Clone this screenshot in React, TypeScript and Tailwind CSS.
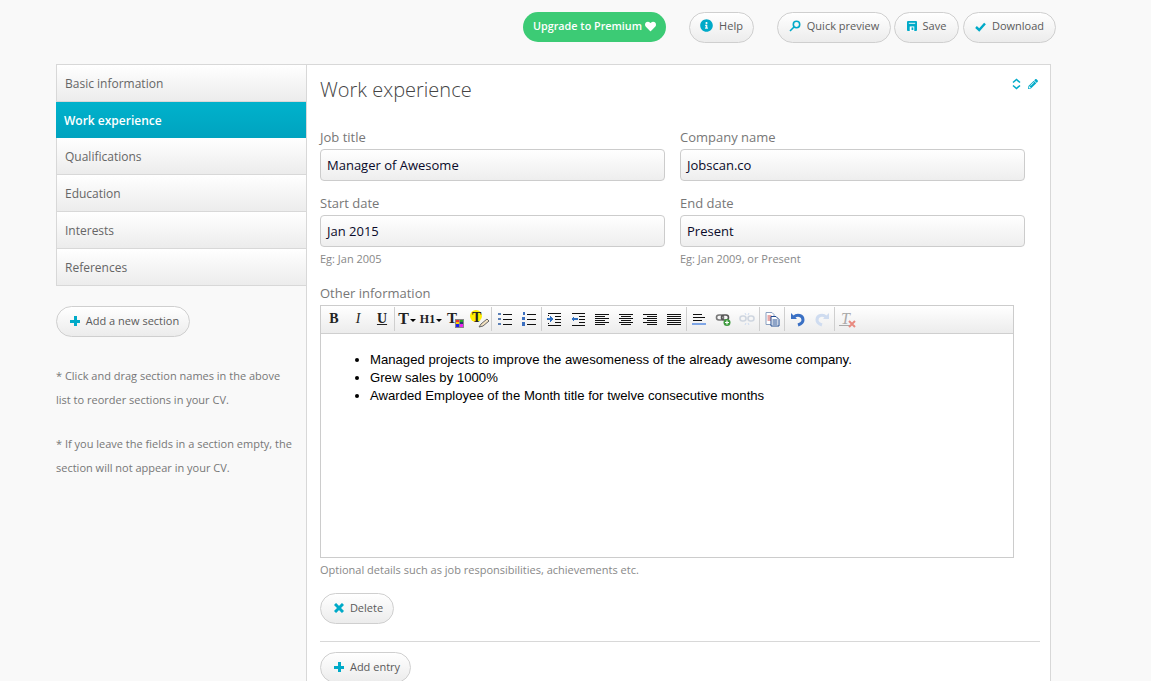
import { ReactNode } from "react";
import { FaHeart, FaInfoCircle, FaPencilAlt } from "react-icons/fa";

const sections = ["Basic information", "Work experience", "Qualifications", "Education", "Interests", "References"];

const Pill = ({ icon, label, className }: { icon: ReactNode; label: string; className: string }) => (
  <button className={`flex h-[31px] items-center justify-center gap-[6px] rounded-full border border-[#cfcfcf] bg-gradient-to-b from-white to-[#ececec] text-[11px] text-[#5a5a5a] ${className}`}>
    <span className="text-[#00aac8]">{icon}</span>
    {label}
  </button>
);

const PlusIcon = () => (
  <svg width="10" height="10" viewBox="0 0 10 10" className="mb-[2px]" shapeRendering="crispEdges">
    <path d="M3.5 0h3v3.5H10v3H6.5V10h-3V6.5H0v-3h3.5z" fill="currentColor" />
  </svg>
);

const Field = ({ label, value, hint }: { label: string; value: string; hint?: string }) => (
  <div className="w-[345px]">
    <label className="block h-[20px] text-[13px] leading-[16px] text-[#777]">{label}</label>
    <div className="flex h-[32px] items-center rounded-[4px] border border-[#ccc] bg-gradient-to-b from-white to-[#eeeeee] pl-[6px] pt-[2px] text-[13px] text-[#0a0a2a]">
      {value}
    </div>
    {hint && <p className="mt-[4px] h-[16px] text-[11px] leading-[16px] text-[#888]">{hint}</p>}
  </div>
);

// rows of black lines used by the list and align buttons
const Lines = ({ rows, color = "#111" }: { rows: [number, number, number][]; color?: string }) => (
  <svg width="16" height="16" viewBox="0 0 16 16" shapeRendering="crispEdges">
    {rows.map(([x, y, w]) => (
      <rect key={`${x}-${y}`} x={x} y={y} width={w} height="1" fill={color} />
    ))}
  </svg>
);

const Btn = ({ children }: { children: ReactNode }) => (
  <div className="flex h-[26px] w-6 shrink-0 items-center justify-center">{children}</div>
);

const Sep = () => <div className="my-[1px] h-[24px] w-px shrink-0 bg-[#cfcfcf]" />;

const Letter = ({ children, className }: { children: ReactNode; className: string }) => (
  <span className={`font-['Liberation_Serif',serif] leading-none text-[#222] ${className}`}>{children}</span>
);

const Caret = () => <span className="ml-[1px] mt-[2px] border-x-[3px] border-t-[3px] border-x-transparent border-t-black" />;

const Toolbar = () => (
  <div className="flex h-[28px] border-b border-[#cfcfcf] bg-gradient-to-b from-white to-[#ececec] pl-px">
    <Btn><Letter className="text-[14px] font-bold">B</Letter></Btn>
    <Btn><Letter className="text-[14px] italic">I</Letter></Btn>
    <Btn><Letter className="text-[14px] font-bold underline">U</Letter></Btn>
    <Sep />
    <Btn><Letter className="text-[16px] font-bold">T</Letter><Caret /></Btn>
    <Btn><Letter className="text-[12px] font-bold">H1</Letter><Caret /></Btn>
    <Btn>
      <div className="relative h-4 w-4">
        <Letter className="absolute left-0 top-0 text-[15px] font-bold">T</Letter>
        <svg className="absolute bottom-[-1px] right-[-1px]" width="9" height="9" viewBox="0 0 9 9" shapeRendering="crispEdges">
          <rect width="9" height="9" fill="#888" />
          <rect x="1" y="1" width="3" height="2" fill="#e33" />
          <rect x="5" y="1" width="3" height="2" fill="#2a2" />
          <rect x="1" y="3" width="3" height="2" fill="#fc0" />
          <rect x="5" y="3" width="3" height="2" fill="#246" />
          <rect x="1" y="5" width="3" height="3" fill="#22e" />
          <rect x="5" y="5" width="3" height="3" fill="#e2e" />
        </svg>
      </div>
    </Btn>
    <Btn>
      <div className="relative h-4 w-4">
        <span className="absolute left-[-1px] top-[-1px] h-[12px] w-[12px] rounded-full bg-[#ffee00]" />
        <Letter className="absolute left-[1px] top-0 text-[14px] font-bold">T</Letter>
        <svg className="absolute bottom-[-1px] right-[-3px]" width="12" height="10" viewBox="0 0 12 10">
          <path d="M1 9 L3 6 L9 1 L11 3 L5 8 Z" fill="#f3e2c0" stroke="#666" strokeWidth="1" />
        </svg>
      </div>
    </Btn>
    <Sep />
    <div className="w-px shrink-0" />
    <Btn>
      <svg width="16" height="16" viewBox="0 0 16 16" shapeRendering="crispEdges">
        <rect x="1" y="2" width="3" height="2" fill="#5b7fb5" />
        <rect x="1" y="7" width="3" height="2" fill="#5b7fb5" />
        <rect x="1" y="12" width="3" height="2" fill="#5b7fb5" />
        <rect x="6" y="3" width="9" height="1" fill="#111" />
        <rect x="6" y="8" width="9" height="1" fill="#111" />
        <rect x="6" y="13" width="9" height="1" fill="#111" />
      </svg>
    </Btn>
    <Btn>
      <svg width="16" height="16" viewBox="0 0 16 16" shapeRendering="crispEdges">
        <rect x="2" y="1" width="2" height="3" fill="#3b6fc0" />
        <rect x="1" y="6" width="3" height="3" fill="#3b6fc0" />
        <rect x="1" y="11" width="3" height="4" fill="#3b6fc0" />
        <rect x="6" y="3" width="9" height="1" fill="#111" />
        <rect x="6" y="8" width="9" height="1" fill="#111" />
        <rect x="6" y="13" width="9" height="1" fill="#111" />
      </svg>
    </Btn>
    <Sep />
    <Btn>
      <svg width="16" height="16" viewBox="0 0 16 16" shapeRendering="crispEdges">
        <path d="M1 7h3V5l3 3-3 3V9H1z" fill="#2f6fc0" />
        <path d="M2 2h13v1H2zM9 5h6v1H9zM9 8h6v1H9zM9 11h6v1H9zM2 14h13v1H2z" fill="#111" />
        <path d="M2 4h1v1H2zM2 12h1v1H2z" fill="#111" />
      </svg>
    </Btn>
    <Btn>
      <svg width="16" height="16" viewBox="0 0 16 16" shapeRendering="crispEdges">
        <path d="M8 7H4V5L1 8l3 3V9h4z" fill="#2f6fc0" />
        <path d="M2 2h13v1H2zM9 5h6v1H9zM9 8h6v1H9zM9 11h6v1H9zM2 14h13v1H2z" fill="#111" />
      </svg>
    </Btn>
    <Btn><Lines rows={[[1, 3, 14], [1, 5, 10], [1, 7, 14], [1, 9, 10], [1, 11, 14], [1, 13, 10]]} /></Btn>
    <Btn><Lines rows={[[1, 3, 14], [3, 5, 10], [1, 7, 14], [3, 9, 10], [1, 11, 14], [3, 13, 10]]} /></Btn>
    <Btn><Lines rows={[[1, 3, 14], [5, 5, 10], [1, 7, 14], [5, 9, 10], [1, 11, 14], [5, 13, 10]]} /></Btn>
    <Btn><Lines rows={[[1, 3, 14], [1, 5, 14], [1, 7, 14], [1, 9, 14], [1, 11, 14], [1, 13, 14]]} /></Btn>
    <Sep />
    <Btn>
      <svg width="16" height="16" viewBox="0 0 16 16" shapeRendering="crispEdges">
        <rect x="2" y="3" width="9" height="1" fill="#111" />
        <rect x="2" y="6" width="12" height="1" fill="#111" />
        <rect x="2" y="9" width="9" height="1" fill="#111" />
        <rect x="1" y="12" width="14" height="2" fill="#7fa6e6" />
      </svg>
    </Btn>
    <Btn>
      <svg width="16" height="16" viewBox="0 0 16 16">
        <rect x="1.5" y="4" width="7" height="5" rx="2.5" fill="none" stroke="#777" strokeWidth="1.6" />
        <rect x="6.5" y="4" width="7" height="5" rx="2.5" fill="none" stroke="#555" strokeWidth="1.6" />
        <circle cx="12" cy="11.5" r="3.5" fill="#3f9b3f" />
        <path d="M10 11.5h4M12 9.5v4" stroke="#fff" strokeWidth="1.2" />
      </svg>
    </Btn>
    <Btn>
      <svg width="16" height="16" viewBox="0 0 16 16">
        <rect x="1" y="5" width="6" height="5" rx="2.5" fill="none" stroke="#cfd6e0" strokeWidth="1.6" />
        <rect x="9" y="5" width="6" height="5" rx="2.5" fill="none" stroke="#cfd6e0" strokeWidth="1.6" />
        <path d="M6 2l1 2M10 2L9 4M6 14l1-2M10 14l-1-2" stroke="#cfdcf0" strokeWidth="1" />
      </svg>
    </Btn>
    <Sep />
    <Btn>
      <svg width="16" height="16" viewBox="0 0 16 16">
        <path d="M2 1.5h6l2 2v10H2z" fill="#fff" stroke="#8aa0c0" />
        <path d="M3.5 5h4M3.5 7h4M3.5 9h4" stroke="#d05050" />
        <path d="M7 5.5h5l3 3v6.5H7z" fill="#fff" stroke="#1f4a90" />
        <path d="M8.5 9h5M8.5 11h5M8.5 13h5" stroke="#1f4a90" />
      </svg>
    </Btn>
    <Sep />
    <div className="w-px shrink-0" />
    <Btn>
      <svg width="16" height="16" viewBox="0 0 16 16" fill="none">
        <path d="M1 2v6h6z" fill="#3a70c4" />
        <path d="M4 6c3-3 9-2 9 3 0 2-2 4-5 5" stroke="#3a70c4" strokeWidth="3" />
      </svg>
    </Btn>
    <Btn>
      <svg width="16" height="16" viewBox="0 0 16 16" fill="none">
        <path d="M15 2v6H9z" fill="#cfdcf0" />
        <path d="M12 6C9 3 3 4 3 9c0 2 2 4 5 5" stroke="#cfdcf0" strokeWidth="3" />
      </svg>
    </Btn>
    <Sep />
    <Btn>
      <div className="relative h-4 w-4">
        <Letter className="absolute left-[2px] top-0 text-[16px] italic !text-[#aaa]">T</Letter>
        <span className="absolute bottom-[1px] left-0 h-px w-[11px] bg-[#aaa]" />
        <svg className="absolute bottom-[-1px] right-[-1px]" width="8" height="8" viewBox="0 0 8 8" stroke="#e88a80" strokeWidth="2">
          <path d="M1 1l6 6M7 1L1 7" />
        </svg>
      </div>
    </Btn>
  </div>
);

export default function App() {
  return (
    <div className="h-[681px] overflow-hidden bg-[#f9f9f9] font-['Open_Sans',sans-serif]">
      <header className="flex items-start pl-[523px] pt-[12px]">
        <button className="flex h-[30px] w-[143px] items-center justify-center gap-[3px] rounded-full bg-[#3ccb75] pb-[2px] text-[10.8px] font-semibold text-white">
          Upgrade to Premium <FaHeart className="text-[11px]" />
        </button>
        <Pill className="ml-[23px] w-[65px] pb-[2px]" label="Help" icon={<FaInfoCircle className="mb-[2px] text-[13px]" />} />
        <Pill
          className="ml-[23px] w-[114px] pb-[2px]"
          label="Quick preview"
          icon={
            <svg width="12" height="12" viewBox="0 0 12 12" fill="none" stroke="currentColor" strokeWidth="1.6" className="mb-[1px]">
              <circle cx="7.5" cy="4.5" r="3.2" />
              <path d="M5 7L1 11" />
            </svg>
          }
        />
        <Pill
          className="ml-[3px] w-[65px] pb-[2px]"
          label="Save"
          icon={
            <svg width="10" height="10" viewBox="0 0 11 11" className="mb-[2px]">
              <path d="M1 0h9a1 1 0 0 1 1 1v9a1 1 0 0 1-1 1H1a1 1 0 0 1-1-1V1a1 1 0 0 1 1-1z" fill="currentColor" />
              <rect x="2" y="2" width="7" height="1" fill="#fff" />
              <rect x="3" y="6" width="5" height="5" fill="#fff" />
              <rect x="5" y="7" width="2" height="3" fill="currentColor" />
            </svg>
          }
        />
        <Pill
          className="ml-[4px] w-[93px] pb-[2px]"
          label="Download"
          icon={
            <svg width="11" height="10" viewBox="0 0 11 10" fill="none" stroke="currentColor" strokeWidth="2.4">
              <path d="M1 5l3.2 3L10 1.5" />
            </svg>
          }
        />
      </header>

      <main className="ml-[56px] mt-[21px] flex w-[995px] items-start">
        <aside className="w-[250px] shrink-0">
          <ul className="border-l border-t border-[#d8d8d8]">
            {sections.map((s) =>
              s === "Work experience" ? (
                <li key={s} className="-ml-px flex h-[36px] items-center bg-gradient-to-b from-[#00b2cc] to-[#00a3bf] pl-[8px] pt-[2px] text-[12px] font-semibold text-white">
                  {s}
                </li>
              ) : (
                <li key={s} className="flex h-[37px] items-center border-b border-[#d8d8d8] bg-gradient-to-b from-white to-[#ececec] pl-[8px] pt-[2px] text-[12px] text-[#666]">
                  {s}
                </li>
              ),
            )}
          </ul>
          <Pill className="mt-[20px] w-[134px] pl-[3px]" label="Add a new section" icon={<PlusIcon />} />
          <div className="mt-[27px] pr-[10px] text-[11px] leading-[24px] text-[#777]">
            <p>* Click and drag section names in the above list to reorder sections in your CV.</p>
            <p className="mt-[20px]">* If you leave the fields in a section empty, the section will not appear in your CV.</p>
          </div>
        </aside>

        <section className="h-[700px] flex-1 border border-[#d8d8d8] bg-white pl-[13px] pr-[10px]">
          <div className="flex h-[64px] items-start justify-between">
            <h1 className="mt-[11px] text-[20px] font-light leading-[28px] text-[#444]">Work experience</h1>
            <div className="mr-[2px] mt-[13px] flex items-center gap-[7px] text-[#00aac8]">
              <svg width="9" height="12" viewBox="0 0 9 12" fill="none" stroke="currentColor" strokeWidth="1.6">
                <path d="M1 4.5L4.5 1.5L8 4.5M1 7.5L4.5 10.5L8 7.5" />
              </svg>
              <FaPencilAlt className="text-[10px]" />
            </div>
          </div>

          <div className="flex gap-[15px]">
            <Field label="Job title" value="Manager of Awesome" />
            <Field label="Company name" value="Jobscan.co" />
          </div>
          <div className="mt-[14px] flex gap-[15px]">
            <Field label="Start date" value="Jan 2015" hint="Eg: Jan 2005" />
            <Field label="End date" value="Present" hint="Eg: Jan 2009, or Present" />
          </div>

          <label className="mt-[18px] block h-[20px] text-[13px] leading-[16px] text-[#777]">Other information</label>
          <div className="h-[253px] w-[694px] border border-[#ccc] bg-white">
            <Toolbar />
            <ul className="list-disc pl-[49px] pt-[17px] font-['Liberation_Sans',sans-serif] text-[13.15px] leading-[18px] text-black">
              <li>Managed projects to improve the awesomeness of the already awesome company.</li>
              <li>Grew sales by 1000%</li>
              <li>Awarded Employee of the Month title for twelve consecutive months</li>
            </ul>
          </div>
          <p className="mt-[4px] h-[16px] text-[11px] leading-[16px] text-[#888]">Optional details such as job responsibilities, achievements etc.</p>

          <Pill
            className="mt-[15px] w-[74px] pl-[3px]"
            label="Delete"
            icon={
              <svg width="10" height="10" viewBox="0 0 10 10" stroke="currentColor" strokeWidth="3" className="mb-[2px]">
                <path d="M1 1l8 8M9 1L1 9" />
              </svg>
            }
          />
          <hr className="mt-[17px] border-[#d8d8d8]" />
          <Pill className="mt-[10px] w-[91px] pl-[3px]" label="Add entry" icon={<PlusIcon />} />
        </section>
      </main>
    </div>
  );
}
